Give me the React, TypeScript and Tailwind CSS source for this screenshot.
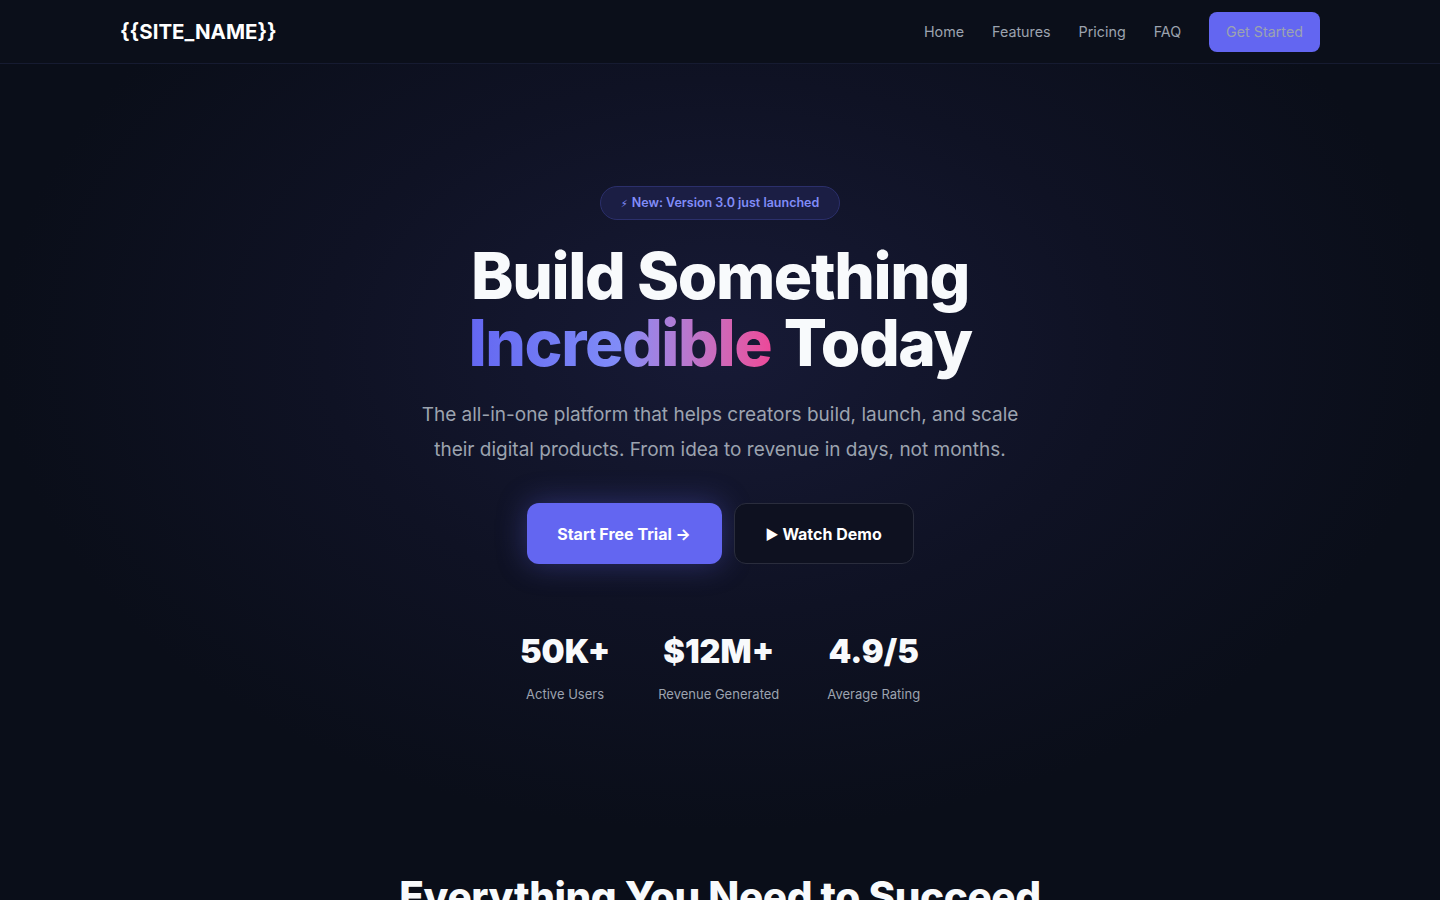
import React from 'react';

const navLinks = ['Home', 'Features', 'Pricing', 'FAQ'];

const stats = [
  { value: '50K+', label: 'Active Users' },
  { value: '$12M+', label: 'Revenue Generated' },
  { value: '4.9/5', label: 'Average Rating' },
];

export default function App() {
  return (
    <div className="min-h-screen bg-[#0a0e19] text-white font-['Inter',sans-serif]">
      {/* --- HEADER --- */}
      <header className="h-16 border-b border-[#161b31] bg-[#0b0f1a]">
        <div className="max-w-[1200px] mx-auto h-full flex items-center justify-between">
          <div className="pt-px text-[20.5px] font-bold text-white">{'{{SITE_NAME}}'}</div>
          <nav className="flex items-center gap-7">
            {navLinks.map((link) => (
              <a key={link} href="#" className="text-[14.3px] text-[#9ca3af]">
                {link}
              </a>
            ))}
            <a href="#" className="h-10 px-[17px] flex items-center rounded-lg bg-[#6366f1] text-[14.3px] text-[#9ca3af]">
              Get Started
            </a>
          </nav>
        </div>
      </header>

      {/* --- HERO --- */}
      <section className="bg-[radial-gradient(ellipse_50%_60%_at_50%_35%,#171a36_0%,#0f1224_55%,#0a0e19_100%)] pt-[122px] pb-[166px]">
        <div className="flex flex-col items-center text-center">
          <div className="h-[34px] px-5 flex items-center gap-1 rounded-full border border-[#2b2f6b] bg-[#1b1e44] text-[12.5px] font-semibold text-[#818cf8]">
            <span className="font-['DejaVu_Sans',sans-serif] text-[10px]">{'\u26A1\uFE0E'}</span>
            <span>New: Version 3.0 just launched</span>
          </div>

          <h1 className="mt-[22px] text-[64px] leading-[67px] font-extrabold tracking-[-0.022em] text-[#f8fafc]">
            Build Something
            <br />
            <span className="bg-gradient-to-r from-[#6366f1] via-[#818cf8] to-[#ec4899] bg-clip-text text-transparent">
              Incredible
            </span>{' '}
            Today
          </h1>

          <p className="mt-[21px] max-w-[604px] text-[19px] leading-[35px] text-[#9ca3af]">
            The all-in-one platform that helps creators build, launch, and scale their digital products. From idea to
            revenue in days, not months.
          </p>

          <div className="mt-9 flex items-center gap-3">
            <button className="h-[61px] w-[195px] rounded-xl bg-[#6366f1] text-[16px] font-bold text-white shadow-[0_0_30px_rgba(99,102,241,0.35)]">
              Start Free Trial →
            </button>
            <button className="h-[61px] w-[180px] rounded-xl border border-[#2a2d3d] bg-[#0e1120] text-[16px] font-bold text-white">
              <span className="text-[14px]">▶</span> Watch Demo
            </button>
          </div>

          <div className="mt-[68px] flex items-start gap-12">
            {stats.map((s) => (
              <div key={s.label} className="flex flex-col items-center">
                <div className="text-[32.5px] leading-[40px] font-black text-[#f8fafc]">{s.value}</div>
                <div className="mt-[13px] text-[13px] text-[#9ca3af]">{s.label}</div>
              </div>
            ))}
          </div>
        </div>
      </section>

      {/* --- FEATURES --- */}
      <section className="pb-24">
        <h2 className="text-center text-[40.5px] leading-[52px] font-extrabold tracking-[-0.01em] text-[#f8fafc]">
          Everything You Need to Succeed
        </h2>
      </section>
    </div>
  );
}
